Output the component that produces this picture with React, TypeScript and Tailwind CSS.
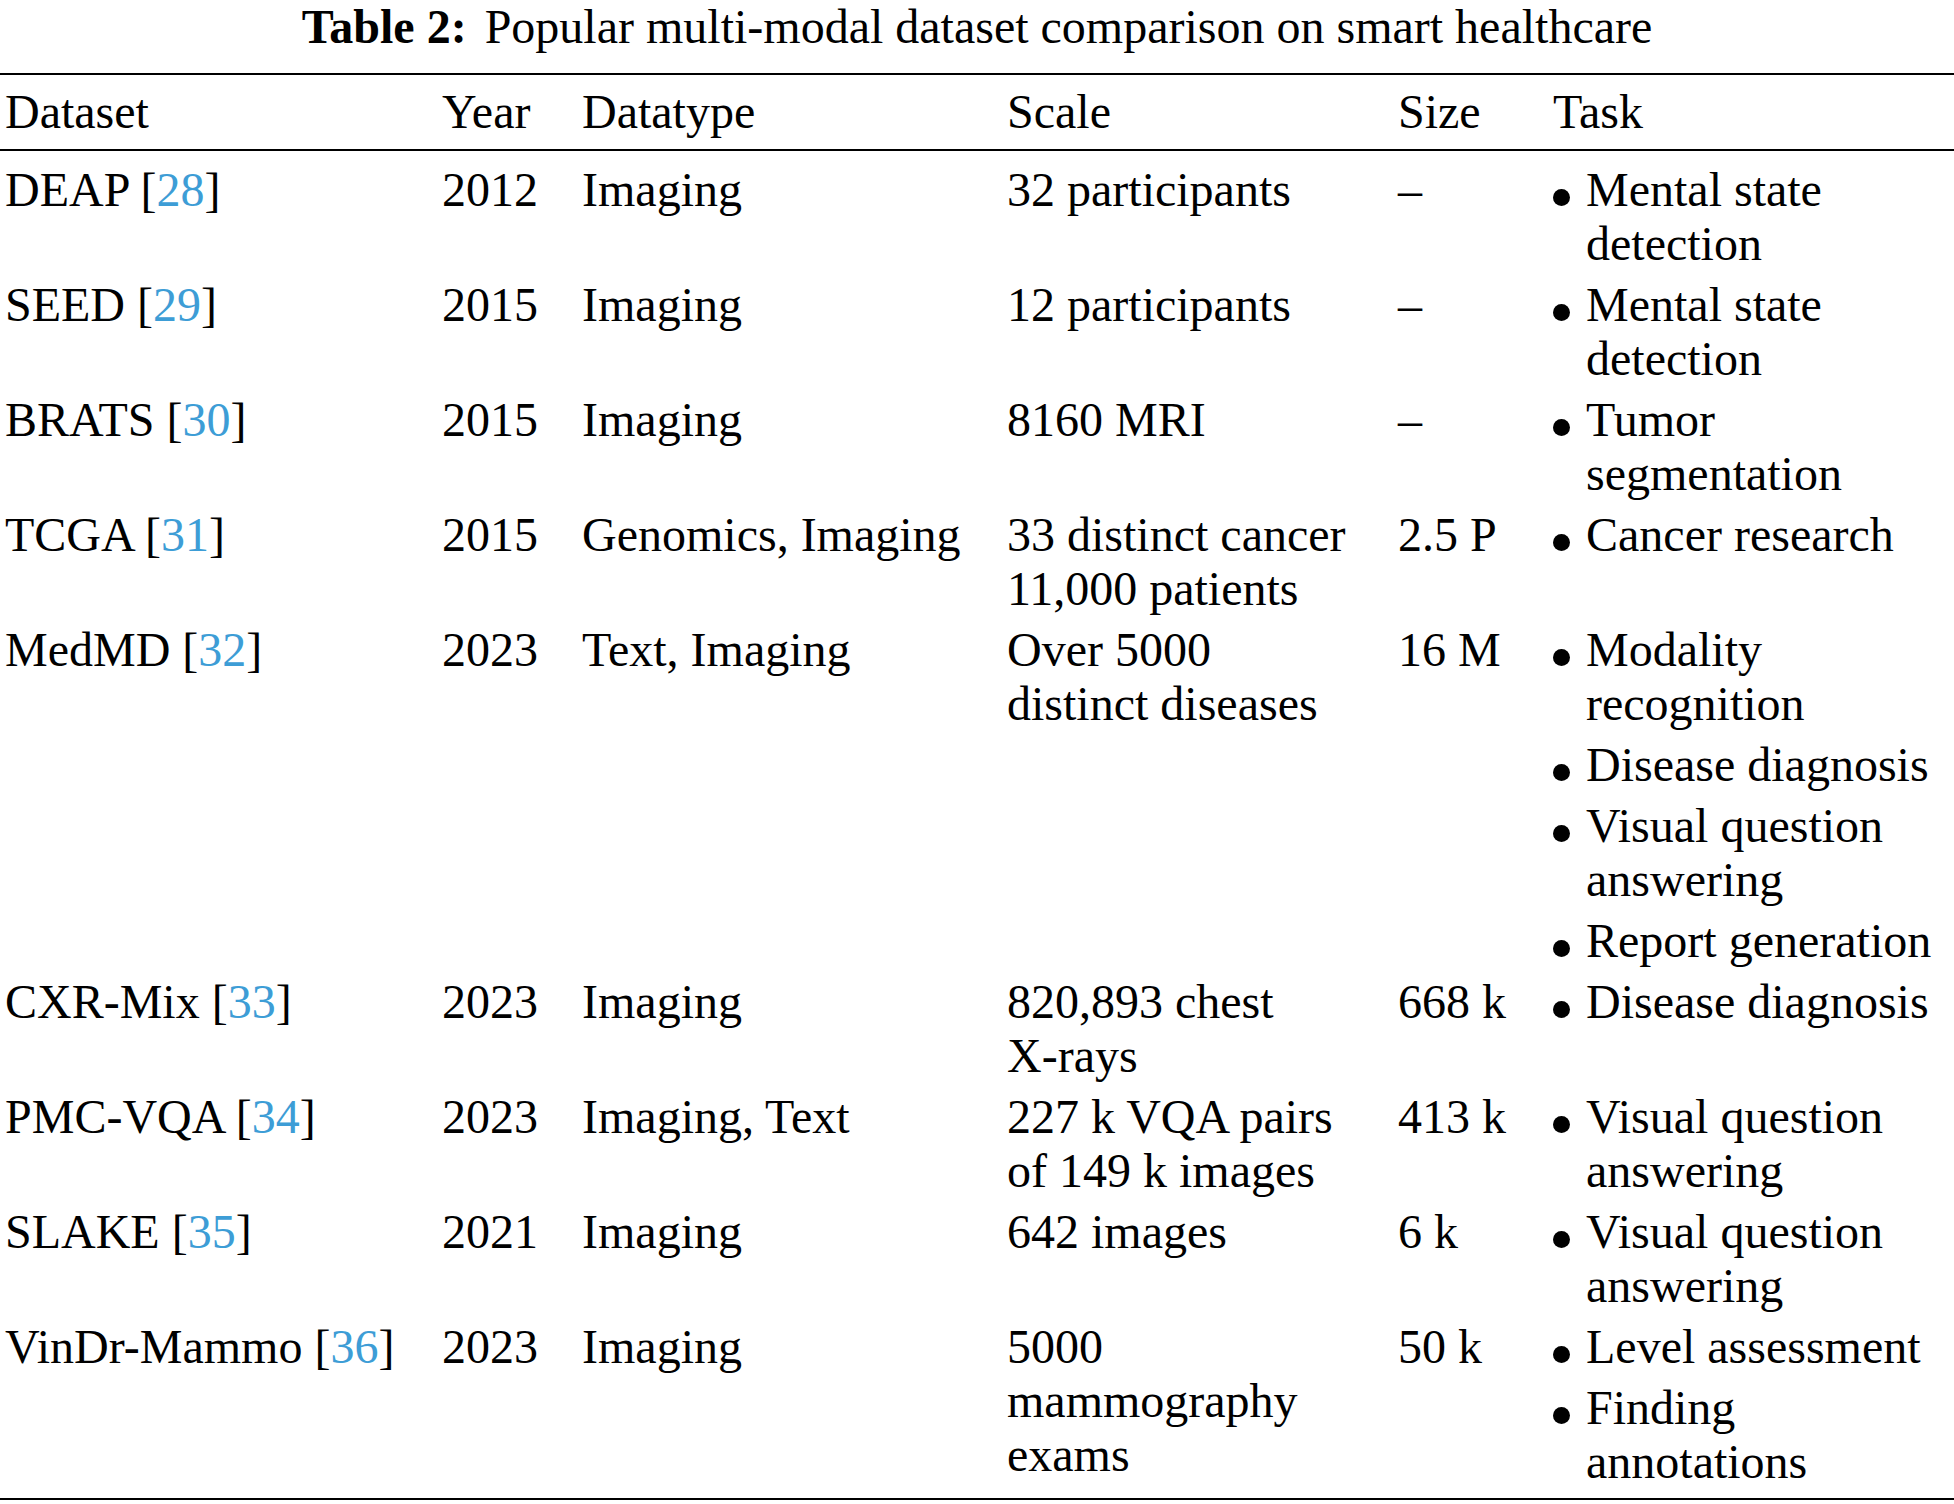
import React from "react";

type Row = {
  name: string;
  cite: string;
  year: string;
  datatype: string;
  scale: string[];
  size: string;
  tasks: string[][];
};

const rows: Row[] = [
  { name: "DEAP", cite: "28", year: "2012", datatype: "Imaging", scale: ["32 participants"], size: "–", tasks: [["Mental state", "detection"]] },
  { name: "SEED", cite: "29", year: "2015", datatype: "Imaging", scale: ["12 participants"], size: "–", tasks: [["Mental state", "detection"]] },
  { name: "BRATS", cite: "30", year: "2015", datatype: "Imaging", scale: ["8160 MRI"], size: "–", tasks: [["Tumor", "segmentation"]] },
  { name: "TCGA", cite: "31", year: "2015", datatype: "Genomics, Imaging", scale: ["33 distinct cancer", "11,000 patients"], size: "2.5 P", tasks: [["Cancer research"]] },
  {
    name: "MedMD",
    cite: "32",
    year: "2023",
    datatype: "Text, Imaging",
    scale: ["Over 5000", "distinct diseases"],
    size: "16 M",
    tasks: [["Modality", "recognition"], ["Disease diagnosis"], ["Visual question", "answering"], ["Report generation"]],
  },
  { name: "CXR-Mix", cite: "33", year: "2023", datatype: "Imaging", scale: ["820,893 chest", "X-rays"], size: "668 k", tasks: [["Disease diagnosis"]] },
  { name: "PMC-VQA", cite: "34", year: "2023", datatype: "Imaging, Text", scale: ["227 k VQA pairs", "of 149 k images"], size: "413 k", tasks: [["Visual question", "answering"]] },
  { name: "SLAKE", cite: "35", year: "2021", datatype: "Imaging", scale: ["642 images"], size: "6 k", tasks: [["Visual question", "answering"]] },
  {
    name: "VinDr-Mammo",
    cite: "36",
    year: "2023",
    datatype: "Imaging",
    scale: ["5000", "mammography", "exams"],
    size: "50 k",
    tasks: [["Level assessment"], ["Finding", "annotations"]],
  },
];

// column starts: 5, 442, 582, 1007, 1398, 1553
const cols = "grid grid-cols-[437px_140px_425px_391px_155px_1fr] pl-[5px]";

function Lines({ lines }: { lines: string[] }) {
  return (
    <div className="whitespace-nowrap">
      {lines.map((l, i) => (
        <div key={i}>{l}</div>
      ))}
    </div>
  );
}

function TaskList({ tasks }: { tasks: string[][] }) {
  return (
    <div className="flex flex-col gap-[7px]">
      {tasks.map((t, i) => (
        <div key={i} className="flex">
          <div className="w-[33px] shrink-0">
            <span className="mt-[26px] block h-[17px] w-[17px] rounded-full bg-black" />
          </div>
          <Lines lines={t} />
        </div>
      ))}
    </div>
  );
}

export default function App() {
  return (
    <div className="min-h-screen bg-white text-black font-['Liberation_Serif','Times_New_Roman',serif] text-[48px] leading-[54px]">
      <h1 className="text-center leading-[54px]">
        <span className="font-bold">Table 2:</span>
        <span className="ml-[18px]">Popular multi-modal dataset comparison on smart healthcare</span>
      </h1>

      <div className="mt-[19px] border-t-2 border-b-2 border-black">
        <div className={`${cols} border-b-2 border-black pt-[10px] pb-[10px]`}>
          <div>Dataset</div>
          <div>Year</div>
          <div>Datatype</div>
          <div>Scale</div>
          <div>Size</div>
          <div>Task</div>
        </div>

        <div className="flex flex-col gap-[7px] pt-[12px] pb-[9px]">
          {rows.map((r) => (
            <div key={r.name} className={cols}>
              <div className="whitespace-nowrap">
                {r.name} [<span className="text-[#3d9dd6]">{r.cite}</span>]
              </div>
              <div>{r.year}</div>
              <div className="whitespace-nowrap">{r.datatype}</div>
              <Lines lines={r.scale} />
              <div className="whitespace-nowrap">{r.size}</div>
              <TaskList tasks={r.tasks} />
            </div>
          ))}
        </div>
      </div>
    </div>
  );
}
